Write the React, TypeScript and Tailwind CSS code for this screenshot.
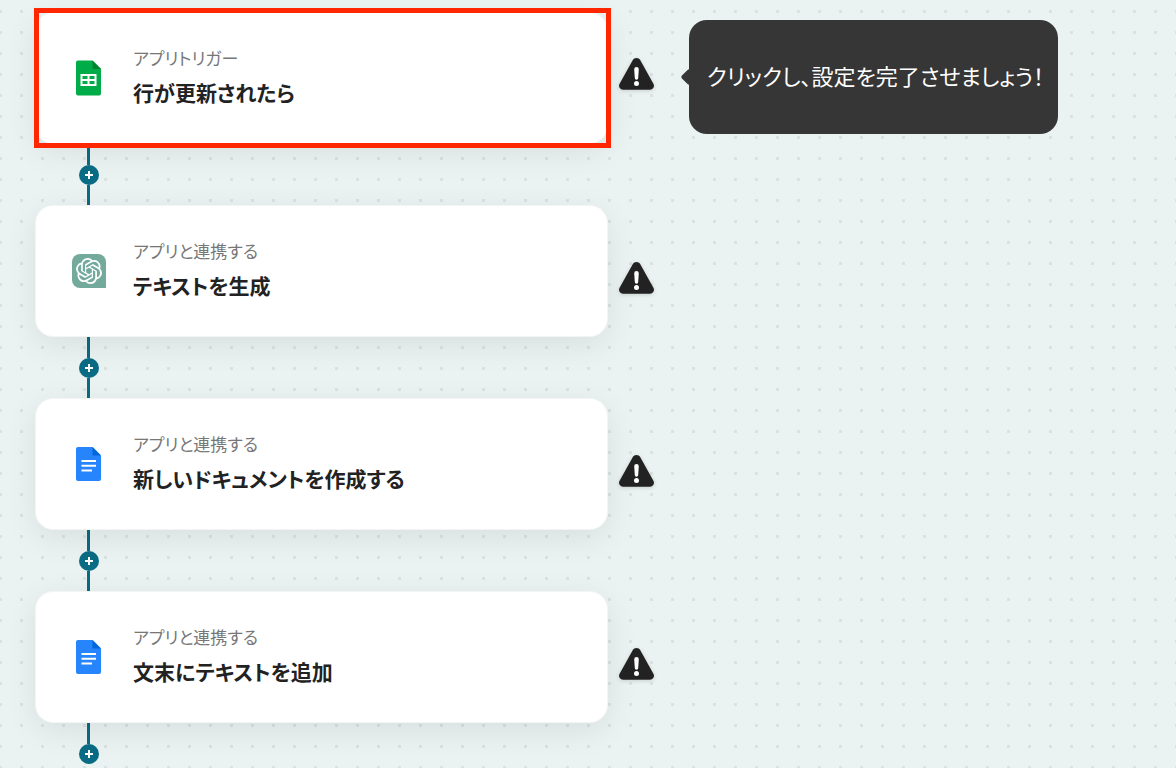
import { SiOpenai } from "react-icons/si";
import { clsx } from "clsx";

type AppName = "sheets" | "chatgpt" | "docs";

type Step = {
  id: number;
  app: AppName;
  kind: string;
  title: string;
  selected?: boolean;
  hint?: string;
};

const steps: Step[] = [
  {
    id: 1,
    app: "sheets",
    kind: "アプリトリガー",
    title: "行が更新されたら",
    selected: true,
    hint: "クリックし、設定を完了させましょう！",
  },
  { id: 2, app: "chatgpt", kind: "アプリと連携する", title: "テキストを生成" },
  { id: 3, app: "docs", kind: "アプリと連携する", title: "新しいドキュメントを作成する" },
  { id: 4, app: "docs", kind: "アプリと連携する", title: "文末にテキストを追加" },
];

function SheetsIcon() {
  return (
    <svg viewBox="0 0 26 36" className="h-9 w-[26px]" aria-hidden="true">
      <path d="M2 0.5H16.5L25 9V33.500a2 2 0 0 1-2 2h-21a2 2 0 0 1-2-2v-31a2 2 0 0 1 2-2Z" fill="#00ac47" />
      <path d="M16.500 0.5L25 9H16.500Z" fill="#00832d" />
      <path d="M4.500 14h16v12h-16Zm2 2v3h5v-3Zm7 0v3h5v-3Zm-7 5v3h5v-3Zm7 0v3h5v-3Z" fill="#fff" fillRule="evenodd" />
    </svg>
  );
}

function DocsIcon() {
  return (
    <svg viewBox="0 0 26 36" className="h-9 w-[26px]" aria-hidden="true">
      <path d="M2 1H16.500L25 9.500V33a2 2 0 0 1-2 2h-21a2 2 0 0 1-2-2V3a2 2 0 0 1 2-2Z" fill="#2684fc" />
      <path d="M16.500 1L25 9.500H16.500Z" fill="#0066da" />
      <path d="M5.500 14h14.500v2H5.500Zm0 4.700h14.500v2H5.500Zm0 4.700h10.500v2H5.500Z" fill="#fff" />
    </svg>
  );
}

function AppIcon({ app }: { app: AppName }) {
  if (app === "sheets") return <SheetsIcon />;
  if (app === "docs") return <DocsIcon />;
  return (
    <span className="flex size-[34px] items-center justify-center rounded-lg rounded-br-none bg-[#74aa9c]">
      <SiOpenai className="size-[26px] text-white" aria-hidden="true" />
    </span>
  );
}

function WarningIcon() {
  return (
    <svg viewBox="0 0 36 38" className="h-[38px] w-9 shrink-0 drop-shadow-sm" role="img" aria-label="未設定">
      <path
        d="M14.700 2.200a4.400 4.400 0 0 1 7.600 0L35.400 25.800a4 4 0 0 1-3.500 6H5.100a4 4 0 0 1-3.500-6Z"
        fill="#222"
      />
      <path d="M16.200 11.200a2.300 2.300 0 0 1 4.600 0l-.6 8.800a1.700 1.700 0 0 1-3.400 0Z" fill="#fff" />
      <circle cx="18.500" cy="25.500" r="2.500" fill="#fff" />
    </svg>
  );
}

function StepCard({ step }: { step: Step }) {
  return (
    <div className="relative w-full max-w-[573px]">
      <button
        type="button"
        className="flex h-[132px] w-full items-center gap-[26px] rounded-[18px] border border-[#f3f5f5] bg-white pr-8 pl-[35px] text-left shadow-[0_8px_32px_rgba(0,0,0,0.08)]"
      >
        <span className="flex w-9 shrink-0 justify-center">
          <AppIcon app={step.app} />
        </span>
        <span className="flex flex-col gap-1">
          <span className="text-[17px] leading-6 text-[#777]">{step.kind}</span>
          <span className="text-[21px] leading-9 font-bold text-[#222]">{step.title}</span>
        </span>
      </button>
      {step.selected && (
        <div className="pointer-events-none absolute -inset-y-1 -right-[3px] -left-px z-10 border-5 border-[#ff2600]" />
      )}
    </div>
  );
}

function Hint({ text }: { text: string }) {
  return (
    <div role="tooltip" className="relative ml-[35px] flex h-[114px] items-center rounded-[18px] bg-[#363636] pr-3.5 pb-1 pl-[18px]">
      <span className="absolute top-1/2 -left-1.5 size-3 -translate-y-1/2 rotate-45 rounded-[2px] bg-[#363636]" />
      <span className="relative text-[22px] leading-8 whitespace-nowrap text-white">{text}</span>
    </div>
  );
}

function Connector({ last }: { last: boolean }) {
  return (
    <div className="ml-11 flex h-[61px] w-5 flex-col">
      <span className="ml-2 w-[3px] grow bg-[#0a6b84]" />
      <button
        type="button"
        aria-label="ステップを追加"
        className="flex size-5 shrink-0 items-center justify-center rounded-full bg-[#0a6b84]"
      >
        <svg viewBox="0 0 8 8" className="size-2" aria-hidden="true">
          <path d="M4 0V8M0 4H8" stroke="#fff" strokeWidth="2" />
        </svg>
      </button>
      <span className={clsx("ml-2 w-[3px] grow", !last && "bg-[#0a6b84]")} />
    </div>
  );
}

export default function App() {
  return (
    <main
      lang="ja"
      className="min-h-screen overflow-hidden bg-[#eaf3f2] bg-[radial-gradient(circle_at_10.5px_10.5px,#dae2e1_1.4px,transparent_1.8px)] bg-[size:21px_21px] bg-[position:-10px_1px] pt-3 pl-[35px] font-['Noto_Sans_CJK_JP',sans-serif] [font-feature-settings:'palt']"
    >
      {steps.map((step, i) => (
        <section key={step.id}>
          <div className="flex items-start">
            <StepCard step={step} />
            <div className={clsx("ml-2.5 flex shrink-0 items-center", step.hint ? "pt-2" : "pt-[57px]")}>
              <WarningIcon />
              {step.hint && <Hint text={step.hint} />}
            </div>
          </div>
          <Connector last={i === steps.length - 1} />
        </section>
      ))}
    </main>
  );
}
